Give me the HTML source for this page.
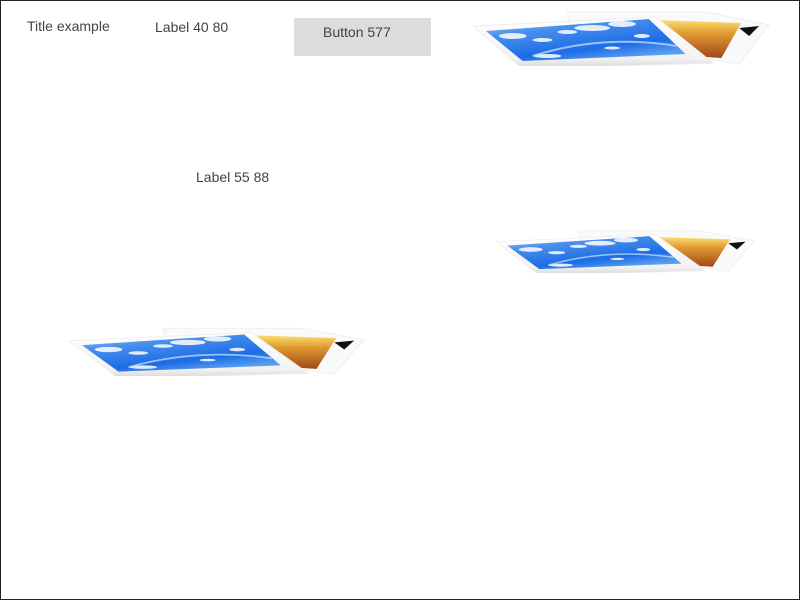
<!DOCTYPE html>
<html><head><meta charset="utf-8"><style>
html,body{margin:0;padding:0;background:#fff}
#f{position:relative;width:798px;height:598px;border:1px solid #222;overflow:hidden;font-family:"Liberation Sans",sans-serif;font-size:14px;color:#444}
.t{position:absolute;white-space:nowrap}
.btn{position:absolute;left:293px;top:17px;width:137px;height:38px;background:#dcdcdc}
.btn span{position:absolute;left:29px;top:6px}
svg.ic{position:absolute}
</style></head><body><div id="f">
<div class="t" style="left:26px;top:17px">Title example</div>
<div class="t" style="left:154px;top:18px">Label 40 80</div>
<div class="btn"><span>Button 577</span></div>
<div class="t" style="left:195px;top:168px">Label 55 88</div>
<svg width="0" height="0" style="position:absolute">
<defs>
<linearGradient id="bl" x1="0" y1="0" x2="0.6" y2="1"><stop offset="0" stop-color="#b8d4f4"/><stop offset="0.3" stop-color="#4a90ec"/><stop offset="0.75" stop-color="#1c6ce6"/><stop offset="1" stop-color="#5aa0f0"/></linearGradient>
<linearGradient id="or" x1="0" y1="0" x2="0" y2="1"><stop offset="0" stop-color="#fbe070"/><stop offset="0.35" stop-color="#e09a30"/><stop offset="1" stop-color="#a04818"/></linearGradient>
<linearGradient id="sh" x1="0" y1="0" x2="0" y2="1"><stop offset="0" stop-color="#fff"/><stop offset="0.8" stop-color="#f2f2f2"/><stop offset="1" stop-color="#d4d4d4"/></linearGradient>
<symbol id="pic" viewBox="0 0 300 60" preserveAspectRatio="none">
<polygon points="95,6 235,6 298,19 268,58 100,30" fill="#fafafa" stroke="#eee"/>
<polygon points="268,22 288,20 278,30" fill="#111"/>
<polygon points="185,14 270,17 250,52 220,50" fill="url(#or)"/>
<polygon points="0,20 184,11 242,57 50,63" fill="url(#sh)" stroke="#eee"/>
<polygon points="13,25 177,13 214,48 50,55" fill="url(#bl)"/>
<g fill="#fff" opacity="0.85">
<ellipse cx="40" cy="30" rx="14" ry="3"/><ellipse cx="70" cy="34" rx="10" ry="2"/>
<ellipse cx="120" cy="22" rx="18" ry="3"/><ellipse cx="150" cy="18" rx="14" ry="3"/>
<ellipse cx="95" cy="26" rx="10" ry="2"/><ellipse cx="170" cy="30" rx="8" ry="2"/>
<ellipse cx="75" cy="50" rx="14" ry="2"/><ellipse cx="140" cy="42" rx="8" ry="1.5"/>
</g>
<path d="M60,50 Q130,28 205,40" stroke="#cfe4ff" stroke-width="2" fill="none" opacity="0.7"/>
</symbol>
</defs></svg>
<svg class="ic" style="left:472px;top:5px" width="298" height="60"><use href="#pic"/></svg>
<svg class="ic" style="left:495px;top:225px" width="260" height="47"><use href="#pic"/></svg>
<svg class="ic" style="left:68px;top:322px" width="297" height="53"><use href="#pic"/></svg>
</div></body></html>
